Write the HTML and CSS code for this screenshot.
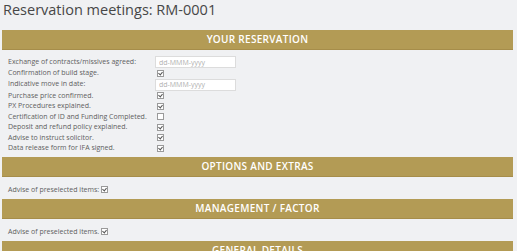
FILE: index.html
```html
<!DOCTYPE html>
<html lang="en">
<head>
    <meta charset="UTF-8">
    <meta name="viewport" content="width=device-width, initial-scale=1.0">
    <title>Reservation meetings</title>
    <link rel="stylesheet" href="styles.css">
</head>
<body>
    <div class="container">
        <h1>Reservation meetings: RM-0001</h1>

        <section class="panel">
            <h2 class="panel-title">YOUR RESERVATION</h2>
            <div class="form-grid">
                <label>Exchange of contracts/missives agreed:</label>
                <input type="text" class="date-input" placeholder="dd-MMM-yyyy">

                <label>Confirmation of build stage.</label>
                <span class="check checked"></span>

                <label>Indicative move in date:</label>
                <input type="text" class="date-input" placeholder="dd-MMM-yyyy">

                <label>Purchase price confirmed.</label>
                <span class="check checked"></span>

                <label>PX Procedures explained.</label>
                <span class="check checked"></span>

                <label>Certification of ID and Funding Completed.</label>
                <span class="check"></span>

                <label>Deposit and refund policy explained.</label>
                <span class="check checked"></span>

                <label>Advise to instruct solicitor.</label>
                <span class="check checked"></span>

                <label>Data release form for IFA signed.</label>
                <span class="check checked"></span>
            </div>
        </section>

        <section class="panel">
            <h2 class="panel-title">OPTIONS AND EXTRAS</h2>
            <div class="inline-row">
                <label>Advise of preselected items:</label>
                <span class="check checked"></span>
            </div>
        </section>

        <section class="panel">
            <h2 class="panel-title">MANAGEMENT / FACTOR</h2>
            <div class="inline-row">
                <label>Advise of preselected items.</label>
                <span class="check checked"></span>
            </div>
        </section>

        <section class="panel">
            <h2 class="panel-title">GENERAL DETAILS</h2>
        </section>
    </div>
</body>
</html>
```

FILE: styles.css
```css
:root {
    --gold: #b39b55;
    --gold-dark: #a68d4a;
    --text-primary: #3c3c3c;
    --text-label: #5e5e5e;
    --bg: #f0f1f3;
    --border-color: #dcdcdc;
}

* {
    margin: 0;
    padding: 0;
    box-sizing: border-box;
}

body {
    font-family: "Open Sans", "Liberation Sans", sans-serif;
    background-color: var(--bg);
    color: var(--text-primary);
    overflow: hidden;
}

.container {
    padding: 0 4px 0 2px;
}

h1 {
    font-size: 14.5px;
    font-weight: 400;
    line-height: 19px;
    padding: 0 0 0 1px;
    margin-bottom: 11px;
    color: #474747;
}

.panel-title {
    background: var(--gold);
    border-bottom: 1px solid var(--gold-dark);
    color: #fff;
    font-size: 10px;
    font-weight: 600;
    line-height: 19px;
    height: 20px;
    text-align: center;
    letter-spacing: 0.3px;
}

.form-grid {
    display: grid;
    grid-template-columns: 147px 81px;
    align-items: center;
    padding: 6px 6px 3px;
}

label {
    font-size: 7px;
    color: var(--text-label);
    line-height: 10.5px;
    white-space: nowrap;
}

.date-input {
    width: 81px;
    height: 12px;
    border: 1px solid var(--border-color);
    background: #fff;
    font-family: inherit;
    font-size: 7px;
    padding: 0 3px;
}

.date-input::placeholder {
    color: #b0b0b0;
}

.check {
    display: inline-block;
    width: 7px;
    height: 7px;
    margin-left: 2px;
    border: 1px solid #9a9a9a;
    background: #fff;
    position: relative;
}

.check.checked::after {
    content: "";
    position: absolute;
    left: 1px;
    top: 0;
    width: 2px;
    height: 3px;
    border: solid #555;
    border-width: 0 1px 1px 0;
    transform: rotate(40deg);
}

.inline-row {
    display: flex;
    align-items: center;
    gap: 2px;
    padding: 8px 6px 3.5px;
}

.inline-row .check {
    margin-left: 0;
}
```
